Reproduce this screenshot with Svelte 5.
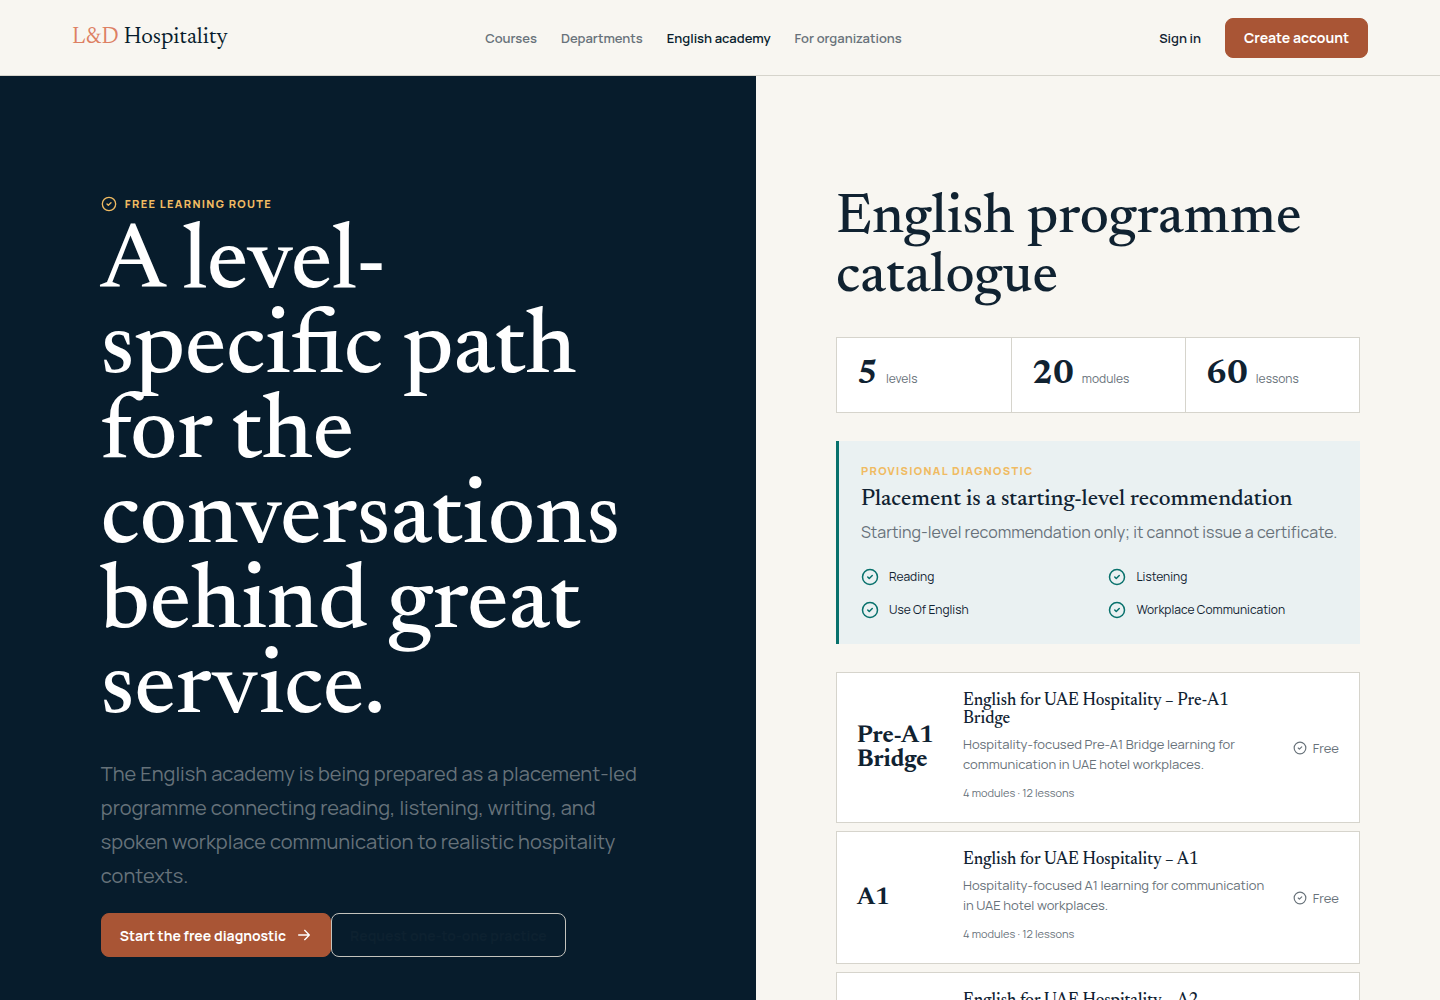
<script>
  const navLinks = [
    { label: 'Courses', href: '#courses' },
    { label: 'Departments', href: '#departments' },
    { label: 'English academy', href: '#english', current: true },
    { label: 'For organizations', href: '#organizations' }
  ];

  const stats = [
    { value: 5, label: 'levels' },
    { value: 20, label: 'modules' },
    { value: 60, label: 'lessons' }
  ];

  const skills = ['Reading', 'Listening', 'Use Of English', 'Workplace Communication'];

  const levels = ['Pre-A1 Bridge', 'A1', 'A2'];
</script>

{#snippet checkIcon(size)}
  <svg
    class="icon"
    width={size}
    height={size}
    viewBox="0 0 24 24"
    fill="none"
    stroke="currentColor"
    stroke-width="2"
    stroke-linecap="round"
    stroke-linejoin="round"
    aria-hidden="true"
  >
    <circle cx="12" cy="12" r="10" />
    <path d="m9 12 2 2 4-4" />
  </svg>
{/snippet}

<header class="site-header">
  <a class="brand" href="#home"><span>L&amp;D</span> Hospitality</a>
  <nav class="main-nav" aria-label="Main">
    {#each navLinks as link}
      <a href={link.href} class:current={link.current} aria-current={link.current ? 'page' : undefined}>{link.label}</a>
    {/each}
  </nav>
  <div class="account">
    <a class="sign-in" href="#sign-in">Sign in</a>
    <a class="btn btn-primary btn-small" href="#register">Create account</a>
  </div>
</header>

<main class="academy">
  <section class="intro">
    <p class="eyebrow">{@render checkIcon(16)} Free learning route</p>
    <h1>A level-specific path for the conversations behind great service.</h1>
    <p class="lead">
      The English academy is being prepared as a placement-led programme connecting reading, listening, writing, and
      spoken workplace communication to realistic hospitality contexts.
    </p>
    <div class="actions">
      <a class="btn btn-primary" href="#diagnostic">
        Start the free diagnostic
        <svg
          width="16"
          height="16"
          viewBox="0 0 24 24"
          fill="none"
          stroke="currentColor"
          stroke-width="2"
          stroke-linecap="round"
          stroke-linejoin="round"
          aria-hidden="true"
        >
          <path d="M4 12h16M13 5l7 7-7 7" />
        </svg>
      </a>
      <a class="btn btn-outline" href="#practice">Request one-to-one practice</a>
    </div>
  </section>

  <section class="catalogue">
    <h2>English programme catalogue</h2>

    <div class="stats">
      {#each stats as stat}
        <div class="stat"><strong>{stat.value}</strong><span>{stat.label}</span></div>
      {/each}
    </div>

    <div class="diagnostic" id="diagnostic">
      <p class="eyebrow">Provisional diagnostic</p>
      <h3>Placement is a starting-level recommendation</h3>
      <p class="note">Starting-level recommendation only; it cannot issue a certificate.</p>
      <ul class="skills">
        {#each skills as skill}
          <li>{@render checkIcon(18)} {skill}</li>
        {/each}
      </ul>
    </div>

    <div class="levels">
      {#each levels as level}
        <article class="level">
          <strong class="level-name">{level}</strong>
          <div class="level-body">
            <h3>English for UAE Hospitality – {level}</h3>
            <p>Hospitality-focused {level} learning for communication in UAE hotel workplaces.</p>
            <small>4 modules · 12 lessons</small>
          </div>
          <span class="price">{@render checkIcon(14)} Free</span>
        </article>
      {/each}
    </div>
  </section>
</main>

<style>
  :global(body) {
    margin: 0;
    background: #f8f6f1;
    color: #102231;
    font-family: Manrope, Inter, 'Liberation Sans', sans-serif;
    font-size: 16px;
  }

  h1,
  h2,
  h3,
  p,
  ul {
    margin: 0;
    padding: 0;
  }

  h1,
  h2,
  h3,
  .brand,
  .stat strong,
  .level-name {
    font-family: Newsreader, 'Liberation Serif', serif;
  }

  a {
    color: inherit;
    text-decoration: none;
  }

  .icon {
    flex: none;
  }

  .site-header {
    display: flex;
    align-items: center;
    justify-content: space-between;
    min-height: 75px;
    padding: 0 72px;
    border-bottom: 1px solid #d6d4cc;
    background: #f8f6f1;
  }

  .brand {
    font-size: 23px;
    color: #071c2c;
  }

  .brand span {
    color: #dd8063;
  }

  .main-nav {
    display: flex;
    gap: 24px;
    font-size: 13px;
    font-weight: 600;
    color: #68727a;
  }

  .main-nav .current {
    color: #071c2c;
  }

  .account {
    display: flex;
    align-items: center;
    justify-content: flex-end;
    gap: 24px;
  }

  .sign-in {
    font-size: 13px;
    font-weight: 600;
  }

  .btn {
    display: inline-flex;
    align-items: center;
    justify-content: center;
    gap: 10px;
    box-sizing: border-box;
    min-height: 44px;
    padding: 0 18px;
    border: 1px solid transparent;
    border-radius: 8px;
    font-size: 14px;
    font-weight: 700;
    white-space: nowrap;
  }

  .btn-primary {
    border-color: #a95535;
    background: #a95535;
    color: #ffffff;
  }

  .btn-outline {
    border-color: #c4c3bd;
    color: #0d2130;
  }

  .btn-small {
    min-height: 40px;
  }

  .academy {
    display: grid;
    grid-template-columns: 1.05fr 0.95fr;
    min-height: calc(100vh - 76px);
  }

  .intro {
    padding: 120px 7vw;
    background: #071c2c;
    color: #ffffff;
  }

  .eyebrow {
    display: flex;
    align-items: center;
    gap: 8px;
    font-size: 11px;
    font-weight: 800;
    line-height: 16px;
    letter-spacing: 0.12em;
    text-transform: uppercase;
    color: #f0bb62;
  }

  h1 {
    max-width: 540px;
    margin-top: 11px;
    font-size: 92px;
    font-weight: 500;
    line-height: 85px;
  }

  .lead {
    max-width: 560px;
    margin-top: 24px;
    font-size: 20px;
    line-height: 34px;
    color: #66727a;
  }

  .actions {
    display: flex;
    margin-top: 20px;
  }

  .catalogue {
    padding: 113px 80px;
  }

  h2 {
    font-size: 57px;
    font-weight: 500;
    line-height: 59px;
  }

  .stats {
    display: grid;
    grid-template-columns: repeat(3, 1fr);
    margin-top: 30px;
    border: 1px solid #d6d4cc;
    background: #ffffff;
  }

  .stat {
    display: flex;
    align-items: baseline;
    gap: 8px;
    padding: 20px;
  }

  .stat + .stat {
    border-left: 1px solid #d6d4cc;
  }

  .stat strong {
    font-size: 34px;
    line-height: 34px;
  }

  .stat span {
    font-size: 12px;
    line-height: 12px;
    color: #68727a;
  }

  .diagnostic {
    margin-top: 28px;
    padding: 22px 22px 25px;
    border-left: 3px solid #08716c;
    background: #eaf1f2;
  }

  .diagnostic h3 {
    margin-top: 7px;
    font-size: 23px;
    font-weight: 500;
    line-height: 28px;
  }

  .note {
    margin-top: 5px;
    font-size: 16px;
    line-height: 26px;
    color: #68727a;
  }

  .skills {
    display: grid;
    grid-template-columns: 1fr 1fr;
    gap: 15px 18px;
    margin-top: 23px;
    list-style: none;
  }

  .skills li {
    display: flex;
    align-items: center;
    gap: 10px;
    font-size: 12px;
    line-height: 18px;
  }

  .skills :global(.icon) {
    color: #08716c;
  }

  .levels {
    display: grid;
    gap: 8px;
    margin-top: 28px;
  }

  .level {
    display: grid;
    grid-template-columns: 88px 1fr auto;
    align-items: center;
    gap: 18px;
    padding: 20px;
    border: 1px solid #d6d4cc;
    background: #ffffff;
  }

  .level-name {
    font-size: 24px;
    line-height: 24px;
  }

  .level h3 {
    font-size: 17px;
    font-weight: 500;
    line-height: 18px;
  }

  .level p {
    margin: 5px 0 10px;
    font-size: 13px;
    line-height: 20px;
    color: #68727a;
  }

  .level small {
    display: block;
    font-size: 11px;
    line-height: 18px;
    color: #68727a;
  }

  .price {
    display: flex;
    align-items: center;
    gap: 6px;
    font-size: 13px;
    color: #68727a;
  }
</style>
